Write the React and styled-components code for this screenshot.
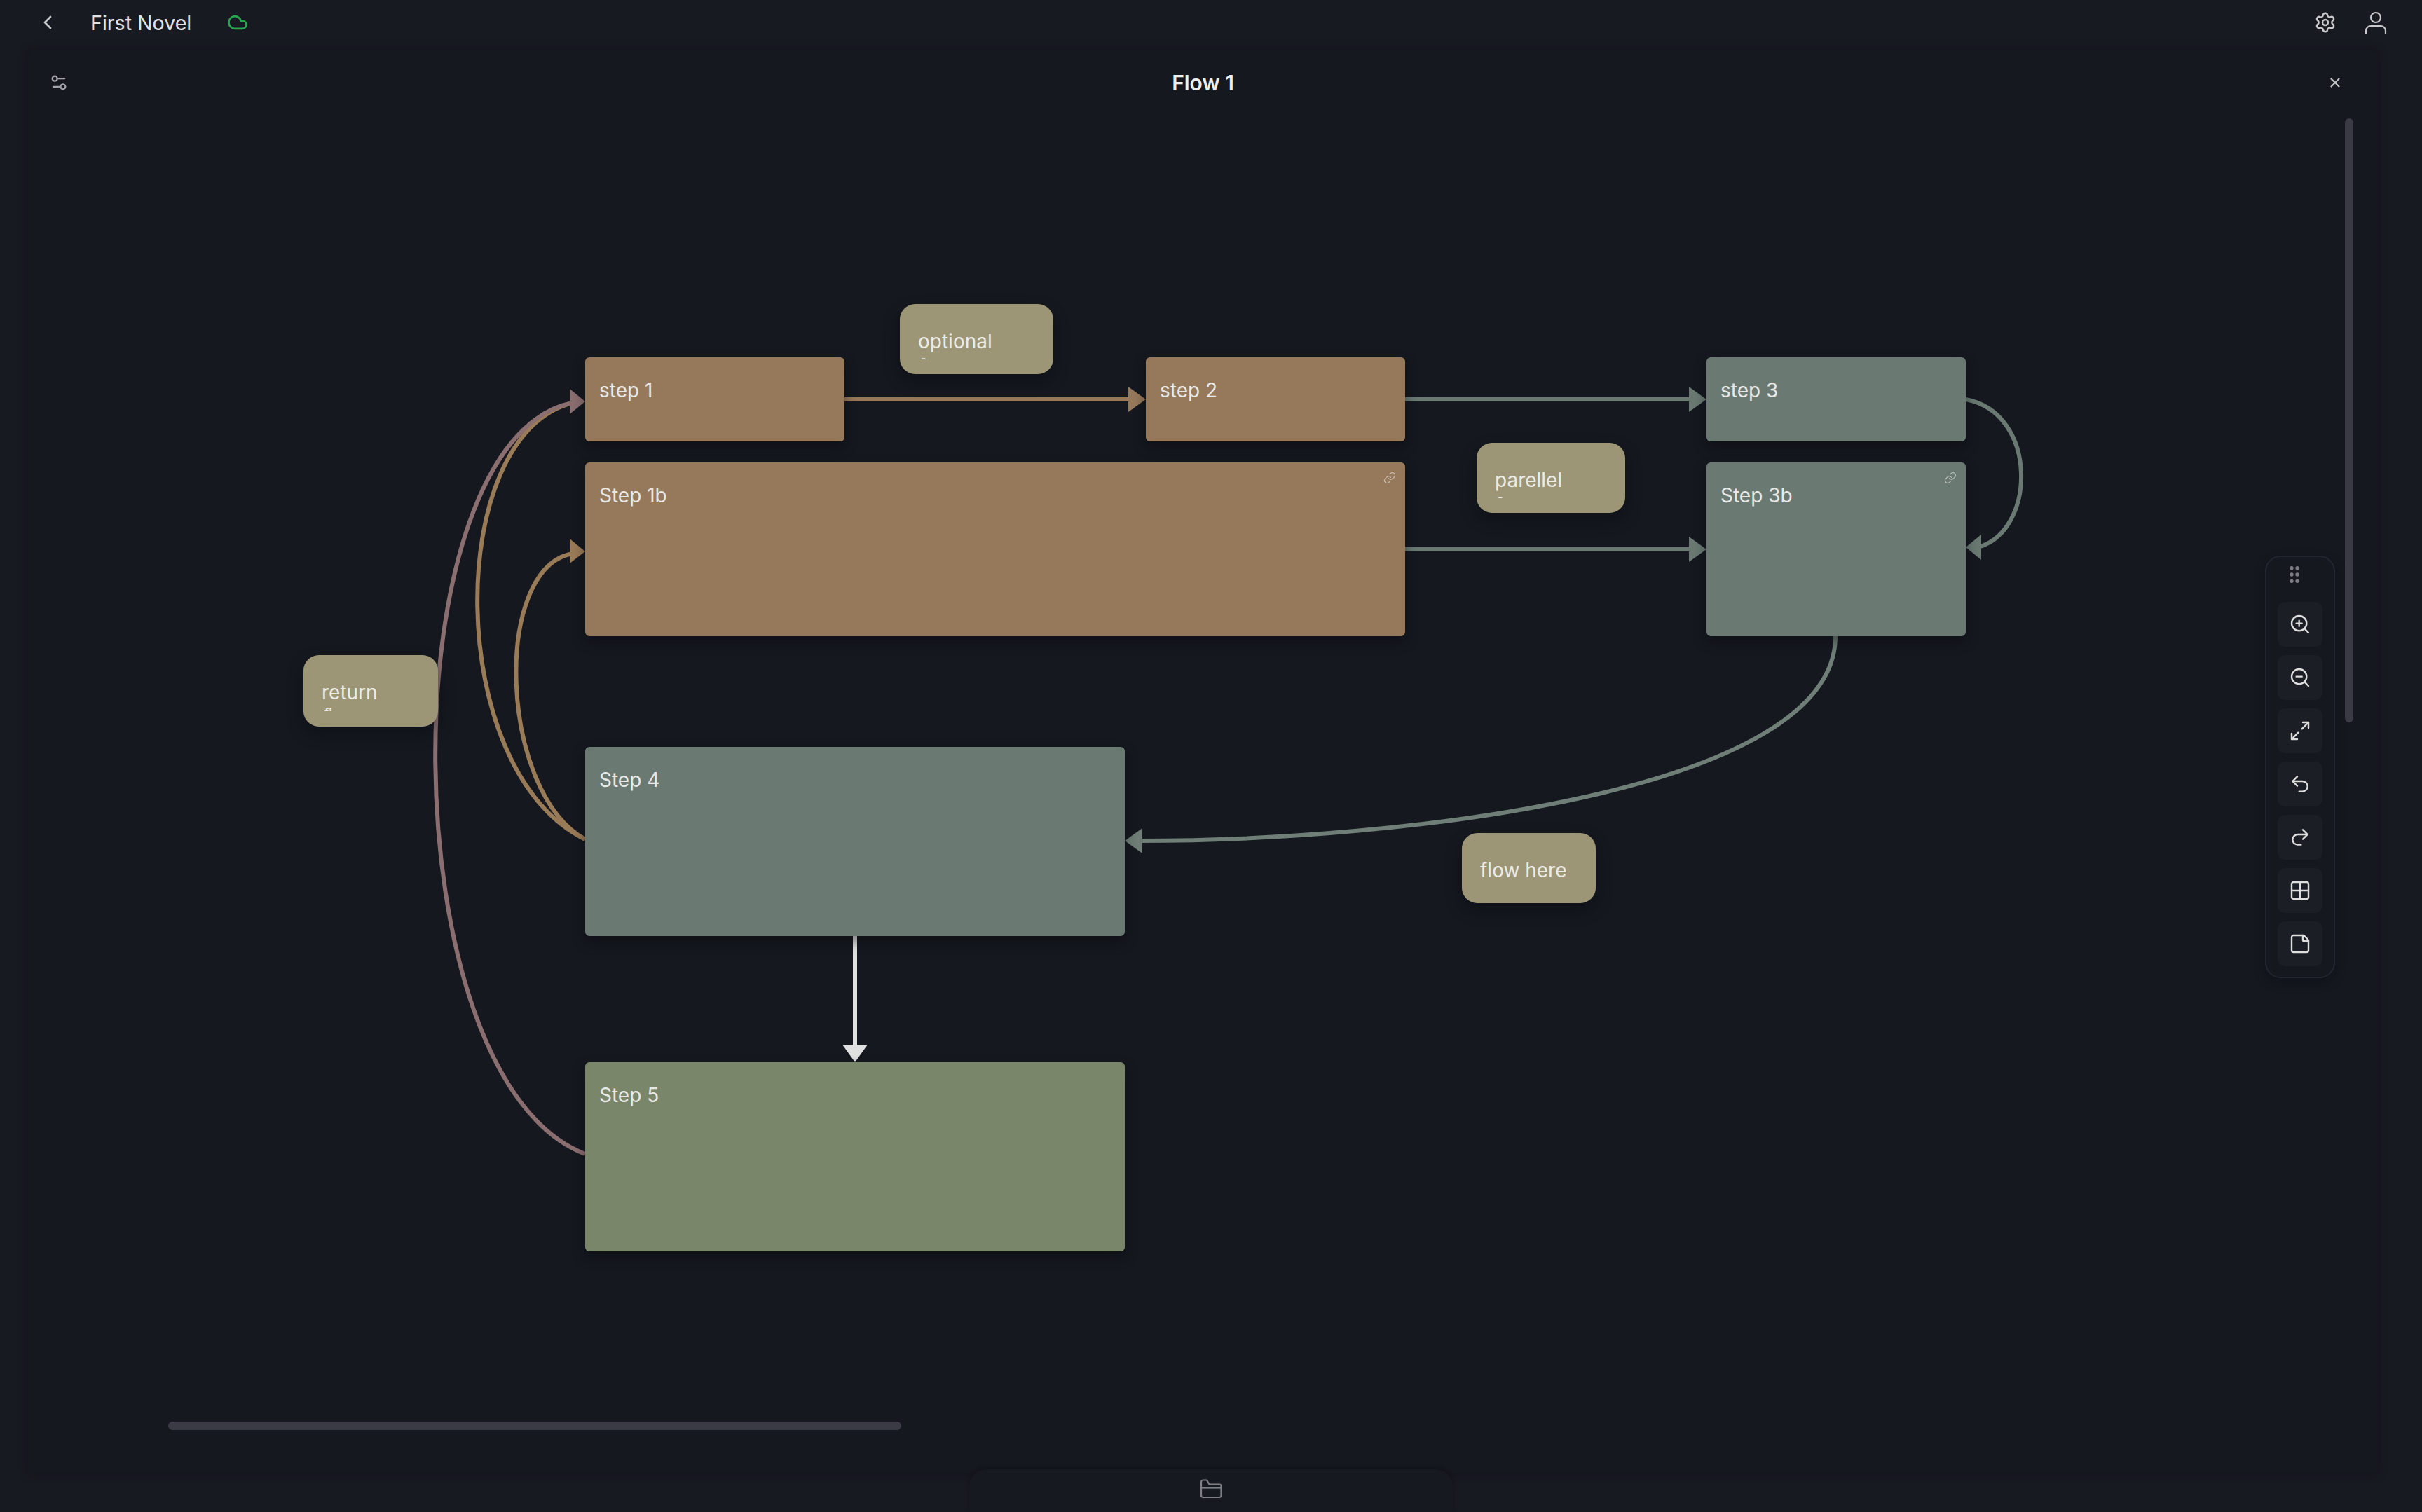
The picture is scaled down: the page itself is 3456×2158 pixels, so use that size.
import React from "react";
import styled, { createGlobalStyle } from "styled-components";
import {
  ChevronLeft, Cloud, Settings, Settings2, X, ZoomIn, ZoomOut, Maximize2,
  Undo2, Redo2, Grid2x2, StickyNote, GripVertical, Link as LinkIcon,
} from "lucide-react";

const PANEL_LEFT = 40;
const BAR_HEIGHT = 72;
const HEADER_HEIGHT = 92;
const CANVAS_Y = BAR_HEIGHT + HEADER_HEIGHT;

const Global = createGlobalStyle`
  html, body { margin: 0; padding: 0; background: #181a22; overflow: hidden; }
  * { box-sizing: border-box; }
`;

const Page = styled.div`
  width: 3456px;
  height: 2158px;
  display: flex;
  flex-direction: column;
  background: #181a22;
  color: #e6e6e6;
  font-family: Inter, "Liberation Sans", sans-serif;
  overflow: hidden;
`;

const TopBar = styled.header`
  height: ${BAR_HEIGHT - 8}px;
  margin-bottom: 8px;
  flex: none;
  display: flex;
  align-items: center;
  padding-left: 52px;
  padding-right: 50px;
  color: #c9c9cc;
`;

const BookTitle = styled.div`
  margin-left: 45px;
  font-size: 28.6px;
  color: #e2e2e4;
`;

const CloudMark = styled.div`
  margin-left: 51px;
  display: flex;
  color: #27a74d;
`;

const Spacer = styled.div`flex: 1;`;

const BarIcons = styled.div`
  display: flex;
  align-items: center;
  gap: 40px;
`;

const Panel = styled.section`
  margin-left: ${PANEL_LEFT}px;
  width: 3353px;
  height: ${2102 - BAR_HEIGHT}px;
  flex: none;
  display: flex;
  flex-direction: column;
  position: relative;
  background: #15181f;
  box-shadow: 0 0 14px rgba(10, 11, 16, 0.4);
  border-radius: 8px 8px 0 0;
`;

const PanelHead = styled.div`
  height: ${HEADER_HEIGHT}px;
  flex: none;
  display: grid;
  grid-template-columns: 1fr auto 1fr;
  align-items: center;
  padding: 0 50px 0 30px;
`;

const PanelTitle = styled.h1`
  margin: 0 0 0 20px;
  font-size: 30px;
  font-weight: 600;
  color: #eeeeee;
`;

const HeadLeft = styled.div`display: flex; color: #a3a3a9;`;
const HeadRight = styled.div`display: flex; justify-content: flex-end; color: #c4c4c8;`;

const Canvas = styled.div`
  flex: 1;
  position: relative;
`;

const Wires = styled.svg`
  position: absolute;
  left: ${-PANEL_LEFT}px;
  top: ${-CANVAS_Y}px;
  pointer-events: none;
`;

const Node = styled.div.attrs((p) => ({
  style: { left: p.$x - PANEL_LEFT, top: p.$y - CANVAS_Y, width: p.$w, height: p.$h },
}))`
  position: absolute;
  border-radius: 6px;
  background: ${(p) => p.$color};
  box-shadow: 0 8px 18px rgba(8, 9, 14, 0.45);
  padding: 29px 20px;
  font-size: 28px;
  line-height: 36px;
  color: #e8e8e6;
`;

const NodeLink = styled.div`
  position: absolute;
  top: 13px;
  right: 13px;
  display: flex;
  color: rgba(240, 240, 240, 0.6);
`;

const Note = styled.div.attrs((p) => ({
  style: { left: p.$x - PANEL_LEFT, top: p.$y - CANVAS_Y, width: p.$w, height: p.$h },
}))`
  position: absolute;
  border-radius: 22px;
  background: #9c9677;
  box-shadow: 0 10px 22px rgba(8, 9, 14, 0.4);
  padding: 35px 26px 0;
  font-size: 28px;
  line-height: 36px;
  color: #ecebe4;
`;

const ClippedLine = styled.div`
  height: 6px;
  margin-top: 3px;
  margin-left: 4px;
  overflow: ${(p) => (p.$clip ? "hidden" : "visible")};
  font-size: 16px;
  line-height: ${(p) => (p.$clip ? "16px" : "6px")};
  font-weight: 600;
`;

const Tools = styled.div`
  position: absolute;
  left: ${3232 - PANEL_LEFT}px;
  top: ${793 - CANVAS_Y}px;
  width: 100px;
  height: 603px;
  display: flex;
  flex-direction: column;
  align-items: center;
  gap: 12px;
  border: 2px solid #23262e;
  border-radius: 22px;
  background: #15181f;
  box-shadow: 0 6px 16px rgba(8, 9, 14, 0.3);
`;

const Grip = styled.div`
  height: 50px;
  margin-bottom: 2px;
  margin-left: -16px;
  display: flex;
  align-items: center;
  color: #7d7e83;
`;

const ToolButton = styled.button`
  width: 64px;
  height: 64px;
  flex: none;
  padding: 0;
  border: 0;
  border-radius: 10px;
  display: flex;
  align-items: center;
  justify-content: center;
  background: #1b1e25;
  color: #dedede;
`;

const VScroll = styled.div`
  position: absolute;
  left: ${3346 - PANEL_LEFT}px;
  top: ${169 - CANVAS_Y}px;
  width: 12px;
  height: 862px;
  border-radius: 6px;
  background: #3a3b44;
`;

const HScroll = styled.div`
  position: absolute;
  left: ${240 - PANEL_LEFT}px;
  top: ${2029 - CANVAS_Y}px;
  width: 1046px;
  height: 12px;
  border-radius: 6px;
  background: #3a3b44;
`;

const Footer = styled.footer`
  flex: 1;
  display: flex;
  justify-content: center;
  background: #181a22;
`;

const FooterTab = styled.div`
  width: 690px;
  margin-top: -5px;
  position: relative;
  display: flex;
  justify-content: center;
  align-items: center;
  padding-bottom: 6px;
  border-radius: 24px 24px 0 0;
  background: #161920;
  box-shadow: 0 -2px 5px rgba(10, 11, 16, 0.45);
  color: #808186;
`;

const EDGES = [
  { id: "a", c: "#96795b", d: "M1205 570H1614", arrow: "1610,552 1635,570 1610,588" },
  { id: "b", c: "#6a7a73", d: "M2005 570H2414", arrow: "2410,552 2435,570 2410,588" },
  { id: "c", c: "#6a7a73", d: "M2005 784H2414", arrow: "2410,766 2435,784 2410,802" },
  { id: "d", c: "#6a7a73", d: "M2805 570C2910 590 2905 760 2822 781", arrow: "2827,763 2805,781 2827,799" },
  { id: "e", c: "#6f7f78", d: "M2619 908C2619 1130 2000 1200 1626 1200", arrow: "1630,1182 1605,1200 1630,1218" },
  { id: "f", c: "#9a7b57", d: "M835 1198C712 1130 702 810 817 790", arrow: "813,769 835,787 813,804" },
  { id: "g", c: "#9a7b57", d: "M835 1198C633 1100 633 620 817 575" },
  { id: "h", c: "#8a6e70", d: "M835 1647C553 1540 553 625 817 575", arrow: "813,555 835,573 813,591" },
  { id: "i", c: "#e0e0e0", d: "M1220 1336V1494", arrow: "1202,1491 1238,1491 1220,1516" },
];

const BOXES = [
  { label: "step 1", x: 835, y: 510, w: 370, h: 120, color: "#96795b" },
  { label: "step 2", x: 1635, y: 510, w: 370, h: 120, color: "#96795b" },
  { label: "step 3", x: 2435, y: 510, w: 370, h: 120, color: "#6a7a73" },
  { label: "Step 1b", x: 835, y: 660, w: 1170, h: 248, color: "#96795b", link: true },
  { label: "Step 3b", x: 2435, y: 660, w: 370, h: 248, color: "#6a7a73", link: true },
  { label: "Step 4", x: 835, y: 1066, w: 770, h: 270, color: "#6a7a73" },
  { label: "Step 5", x: 835, y: 1516, w: 770, h: 270, color: "#798669" },
];

const NOTES = [
  { label: "optional", x: 1284, y: 434, w: 219, h: 100, sub: "-" },
  { label: "parellel", x: 2107, y: 632, w: 212, h: 100, sub: "-" },
  { label: "return", x: 433, y: 935, w: 192, h: 102, sub: "fi", clip: true },
  { label: "flow here", x: 2086, y: 1189, w: 191, h: 100 },
];

const TOOLS = [ZoomIn, ZoomOut, Maximize2, Undo2, Redo2, Grid2x2, StickyNote];

function UserMark() {
  return (
    <svg width="32" height="32" viewBox="0 0 32 32" fill="none" stroke="currentColor" strokeWidth="2.2">
      <circle cx="16" cy="9" r="7" />
      <path d="M2 32v-4a7 7 0 0 1 7-7h14a7 7 0 0 1 7 7v4" />
    </svg>
  );
}

function FolderMark() {
  return (
    <svg width="32" height="28" viewBox="0 0 32 28" fill="none" stroke="currentColor" strokeWidth="2.2" strokeLinejoin="round">
      <path d="M2 4a2.5 2.5 0 0 1 2.5-2.5H10l3.5 6H28a2.5 2.5 0 0 1 2.5 2.5v13.5A2.5 2.5 0 0 1 28 26H4.500A2.500 2.500 0 0 1 2 23.500Z" />
      <path d="M2 12.500H30.500" />
    </svg>
  );
}

export default function App() {
  return (
    <Page>
      <Global />
      <TopBar>
        <ChevronLeft size={32} strokeWidth={2} />
        <BookTitle>First Novel</BookTitle>
        <CloudMark><Cloud size={30} strokeWidth={2.2} /></CloudMark>
        <Spacer />
        <BarIcons>
          <Settings size={32} strokeWidth={1.8} />
          <UserMark />
        </BarIcons>
      </TopBar>
      <Panel>
        <PanelHead>
          <HeadLeft><Settings2 size={28} strokeWidth={1.9} /></HeadLeft>
          <PanelTitle>Flow 1</PanelTitle>
          <HeadRight><X size={22} strokeWidth={2.4} /></HeadRight>
        </PanelHead>
        <Canvas>
          <Wires width="3456" height="2158" viewBox="0 0 3456 2158" fill="none">
            {EDGES.map((e) => (
              <g key={e.id}>
                <path d={e.d} stroke={e.c} strokeWidth="6" />
                {e.arrow && <polygon points={e.arrow} fill={e.c} />}
              </g>
            ))}
          </Wires>
          {BOXES.map((b) => (
            <Node key={b.label} $x={b.x} $y={b.y} $w={b.w} $h={b.h} $color={b.color}>
              {b.label}
              {b.link && (
                <NodeLink><LinkIcon size={18} strokeWidth={1.6} /></NodeLink>
              )}
            </Node>
          ))}
          {NOTES.map((n) => (
            <Note key={n.label} $x={n.x} $y={n.y} $w={n.w} $h={n.h}>
              {n.label}
              {n.sub && <ClippedLine $clip={n.clip}>{n.sub}</ClippedLine>}
            </Note>
          ))}
          <Tools>
            <Grip><GripVertical size={32} strokeWidth={2} /></Grip>
            {TOOLS.map((Icon, i) => (
              <ToolButton key={i}><Icon size={32} strokeWidth={1.8} /></ToolButton>
            ))}
          </Tools>
          <VScroll />
          <HScroll />
        </Canvas>
      </Panel>
      <Footer>
        <FooterTab><FolderMark /></FooterTab>
      </Footer>
    </Page>
  );
}
